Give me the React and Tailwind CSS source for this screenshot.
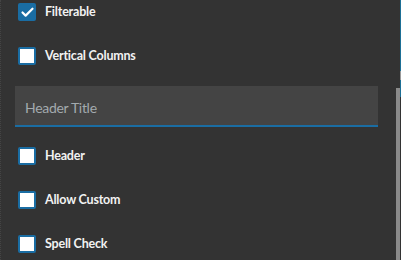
import { Check } from "lucide-react";

const font = { fontFamily: '"Lato", "Open Sans", sans-serif' };

function CheckRow({ label, checked = false }) {
  return (
    <div className="flex items-center h-[44px] pl-[17px]">
      {checked ? (
        <div className="w-[18px] h-[18px] rounded-[2px] bg-[#1a6da3] flex items-center justify-center">
          <Check size={15} strokeWidth={3.5} color="#ffffff" />
        </div>
      ) : (
        <div className="w-[18px] h-[18px] rounded-[2px] border-[2px] border-[#1a6da3] bg-white" />
      )}
      <span className="ml-[9px] text-[12.5px] font-bold tracking-[-0.2px] text-[#f2f2f2]">
        {label}
      </span>
    </div>
  );
}

export default function App() {
  return (
    <div className="w-[401px] h-[260px] bg-[#333333] flex overflow-hidden" style={font}>
      {/* content */}
      <div className="flex-1 border-l border-dotted border-[#444444] overflow-hidden">
        <div className="-mt-[10px]">
          <CheckRow label="Filterable" checked />
          <CheckRow label="Vertical Columns" />

          <div className="pl-[14px] pr-[18px] pt-[8px] pb-[7px]">
            <div className="h-[41px] bg-[#444444] border-b-2 border-[#1a6da3] flex items-center pl-[10px] pt-[3px]">
              <span className="text-[14px] tracking-[-0.3px] text-[#a3aaae]">Header Title</span>
            </div>
          </div>

          <CheckRow label="Header" />
          <CheckRow label="Allow Custom" />
          <CheckRow label="Spell Check" />
        </div>
      </div>

      {/* scrollbar */}
      <div className="w-[4px] flex flex-col">
        <div className="h-[88px]" />
        <div className="flex-1 bg-[#8a8a8a]" />
      </div>

      {/* neighbour edge */}
      <div className="w-[1px] flex flex-col">
        <div className="h-[71px] bg-[#1d6f95]" />
        <div className="h-[9px] bg-[#9a9a9a]" />
        <div className="h-[17px] bg-[#1d6f95]" />
        <div className="flex-1" />
      </div>
    </div>
  );
}
